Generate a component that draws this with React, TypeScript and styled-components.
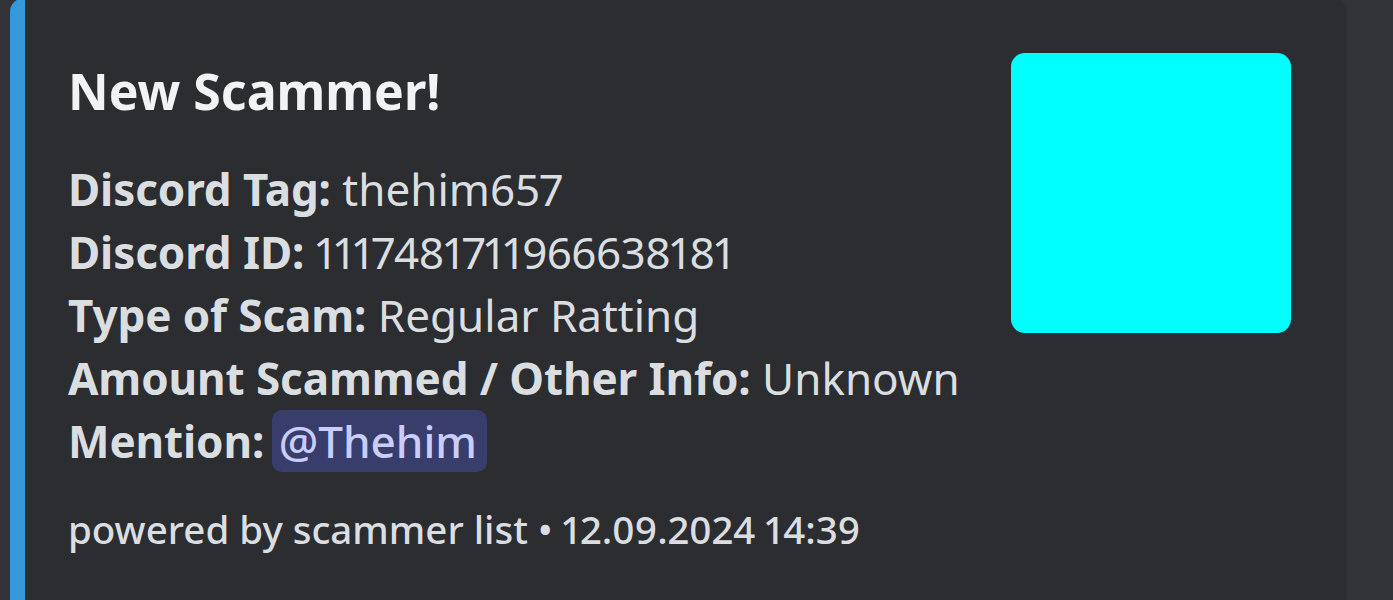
import React from "react";
import styled, { createGlobalStyle } from "styled-components";

const GlobalStyle = createGlobalStyle`
  html, body {
    margin: 0;
    padding: 0;
    background: #313338;
    overflow: hidden;
  }
  body {
    font-family: "Noto Sans", "Open Sans", sans-serif;
    font-variant-numeric: proportional-nums;
  }
`;

const Page = styled.div`
  height: 600px;
  overflow: hidden;
  padding-left: 10px;
  padding-right: 47px;
  background: #313338;
`;

const Embed = styled.article`
  margin-top: -2px;
  height: 640px;
  background: #2b2d31;
  border-left: 15px solid #3498db;
  border-radius: 14px;
  display: grid;
  grid-template-columns: 1fr auto;
  column-gap: 56px;
  padding: 55px 55px 0 43px;
  box-sizing: border-box;
`;

const Body = styled.div`
  display: flex;
  flex-direction: column;
  min-width: 0;
`;

const Title = styled.h2`
  margin: 0;
  font-size: 50px;
  line-height: 77px;
  font-weight: 700;
  color: #f2f3f5;
`;

const Description = styled.div`
  margin-top: 28px;
  font-size: 44px;
  line-height: 63px;
  color: #dbdee1;
`;

const Line = styled.div`
  white-space: nowrap;
`;

const Label = styled.strong`
  font-weight: 700;
  letter-spacing: -0.1px;
`;

const Value = styled.span<{ $numeric?: boolean }>`
  letter-spacing: ${(p) => (p.$numeric ? "-0.6px" : "0")};
`;

const Mention = styled.span`
  background: rgba(88, 101, 242, 0.3);
  color: #c9cdfb;
  border-radius: 10px;
  padding: 1px 10px 1px 7px;
  font-weight: 500;
  margin-left: -4px;
`;

const Footer = styled.div`
  margin-top: 28px;
  font-size: 38.5px;
  line-height: 56px;
  font-weight: 500;
  color: #dbdee1;
  white-space: nowrap;
`;

const Thumbnail = styled.div`
  width: 280px;
  height: 280px;
  border-radius: 14px;
  background: #00ffff;
`;

const fields: { label: string; value: React.ReactNode }[] = [
  { label: "Discord Tag:", value: <Value>thehim657</Value> },
  { label: "Discord ID:", value: <Value $numeric>1117481711966638181</Value> },
  { label: "Type of Scam:", value: <Value>Regular Ratting</Value> },
  { label: "Amount Scammed / Other Info:", value: <Value>Unknown</Value> },
  { label: "Mention:", value: <Mention>@Thehim</Mention> },
];

export default function App() {
  return (
    <>
      <GlobalStyle />
      <Page>
        <Embed>
          <Body>
            <Title>New Scammer!</Title>
            <Description>
              {fields.map((f) => (
                <Line key={f.label}>
                  <Label>{f.label}</Label> {f.value}
                </Line>
              ))}
            </Description>
            <Footer>powered by scammer list • 12.09.2024 14:39</Footer>
          </Body>
          <Thumbnail />
        </Embed>
      </Page>
    </>
  );
}
